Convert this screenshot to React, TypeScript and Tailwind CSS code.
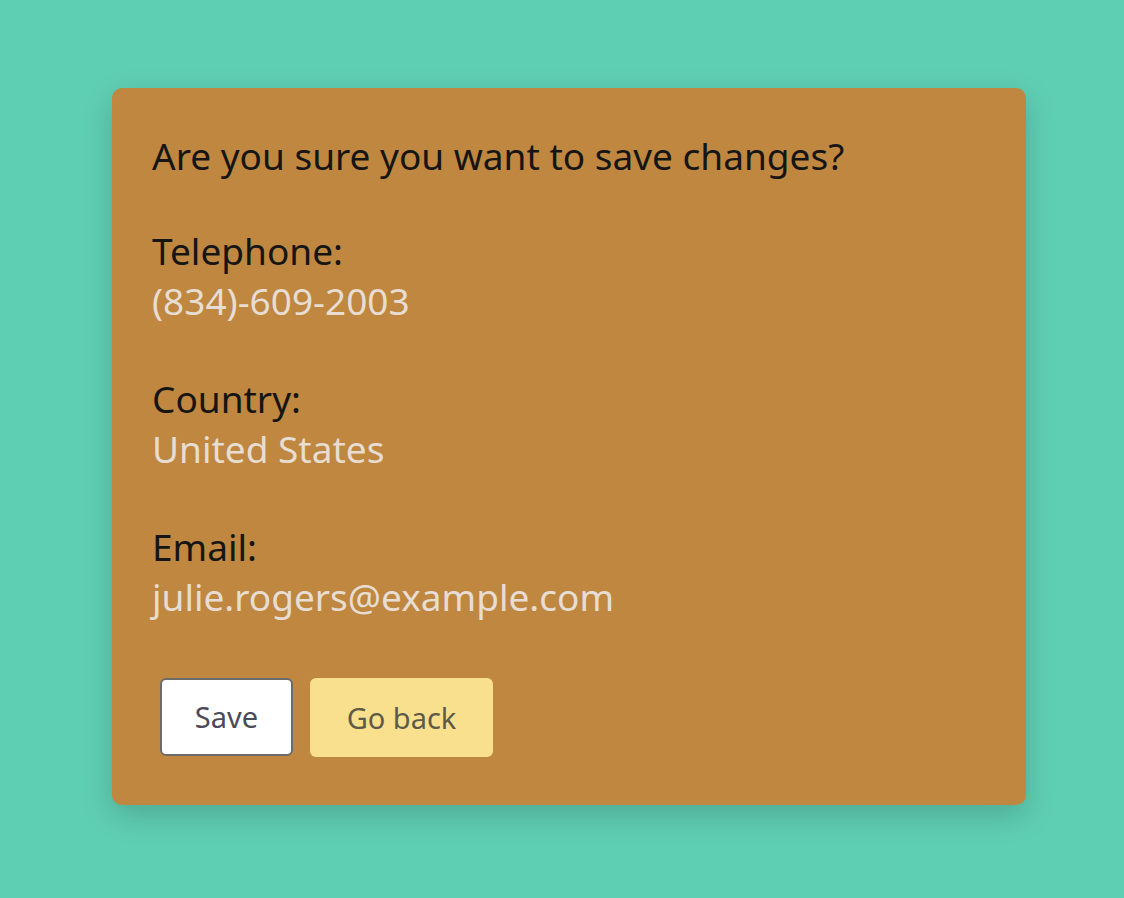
export default function App() {
  return (
    <div className="min-h-[898px] w-full bg-[#5fcfb3] pt-[88px] pl-[112px]" style={{ fontFamily: '"Noto Sans", "Open Sans", sans-serif' }}>
      <div className="w-[914px] h-[717px] rounded-[10px] bg-[#bf873f] shadow-[0_10px_30px_rgba(0,0,0,0.18)] px-[40px] pt-[43px]">
        <div className="text-[37px] leading-[50px] text-[#161513]">
          <p>Are you sure you want to save changes?</p>
          <p className="mt-[45px]">Telephone:</p>
          <p className="text-[#e7ddd2]">(834)-609-2003</p>
          <p className="mt-[48px]">Country:</p>
          <p className="text-[#e7ddd2]">United States</p>
          <p className="mt-[48px]">Email:</p>
          <p className="text-[#e7ddd2]">julie.rogers@example.com</p>
        </div>
        <div className="mt-[56px] ml-[8px] flex gap-[17px]">
          <button className="w-[133px] h-[78px] rounded-[6px] bg-white border-2 border-[#6b6b6b] text-[29px] text-[#4b4a58]">Save</button>
          <button className="w-[183px] h-[79px] rounded-[6px] bg-[#f8e08f] text-[29px] text-[#5e5a47]">Go back</button>
        </div>
      </div>
    </div>
  );
}
